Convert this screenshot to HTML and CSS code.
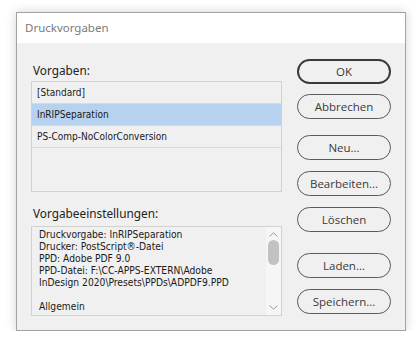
FILE: index.html
```html
<!DOCTYPE html>
<html lang="de">
<head>
    <meta charset="UTF-8">
    <title>Druckvorgaben</title>
    <link rel="stylesheet" href="styles.css">
</head>
<body>
    <div class="dialog">
        <div class="titlebar">Druckvorgaben</div>
        <div class="content">
            <div class="left">
                <div class="label first">Vorgaben:</div>
                <div class="presets">
                    <div class="row">[Standard]</div>
                    <div class="row selected">InRIPSeparation</div>
                    <div class="row">PS-Comp-NoColorConversion</div>
                </div>
                <div class="label second">Vorgabeeinstellungen:</div>
                <div class="settings">
                    <div class="settings-text">
                        <div>Druckvorgabe: InRIPSeparation</div>
                        <div>Drucker: PostScript®-Datei</div>
                        <div>PPD: Adobe PDF 9.0</div>
                        <div>PPD-Datei: F:\CC-APPS-EXTERN\Adobe</div>
                        <div>InDesign 2020\Presets\PPDs\ADPDF9.PPD</div>
                        <div>&nbsp;</div>
                        <div>Allgemein</div>
                    </div>
                    <div class="scrollbar">
                        <svg class="arrow" width="9" height="5" viewBox="0 0 9 5"><path d="M0.5 4.5 L4.5 0.8 L8.5 4.5" fill="none" stroke="#9a9a9a" stroke-width="1"/></svg>
                        <div class="thumb"></div>
                        <div class="track-space"></div>
                        <svg class="arrow" width="9" height="5" viewBox="0 0 9 5"><path d="M0.5 0.5 L4.5 4.2 L8.5 0.5" fill="none" stroke="#9a9a9a" stroke-width="1"/></svg>
                    </div>
                </div>
            </div>
            <div class="buttons">
                <button class="btn default">OK</button>
                <button class="btn">Abbrechen</button>
                <button class="btn group">Neu...</button>
                <button class="btn">Bearbeiten...</button>
                <button class="btn">Löschen</button>
                <button class="btn group-wide">Laden...</button>
                <button class="btn">Speichern...</button>
            </div>
        </div>
    </div>
</body>
</html>
```

FILE: styles.css
```css
body {
    margin: 0;
    padding: 12px 0 0 16px;
    background: #ffffff;
    font-family: "Open Sans", "Noto Sans", sans-serif;
    color: #222;
}

.dialog {
    width: 388px;
    height: 317px;
    border: 1px solid #a3a3a3;
    background: #f0f0f0;
    box-shadow: 0 0 10px rgba(0, 0, 0, 0.18);
    display: flex;
    flex-direction: column;
}

.titlebar {
    height: 30px;
    background: #fff;
    color: #7a7a7a;
    font-family: "Noto Sans", sans-serif;
    font-size: 11.5px;
    line-height: 30px;
    padding-left: 8px;
}

.content {
    display: flex;
    padding: 16px 14px 0 14px;
    gap: 15px;
}

.left {
    width: 251px;
    display: flex;
    flex-direction: column;
}

/* Beschriftungen */
.label {
    font-family: "Noto Sans", sans-serif;
    font-size: 11.8px;
    line-height: 17px;
    color: #222;
    padding-left: 2px;
}

.label.first {
    margin-top: 3px;
    margin-bottom: 2px;
}

.label.second {
    margin-top: 13px;
    margin-bottom: 4px;
}

.presets {
    height: 109px;
    border: 1px solid #d2d2d2;
    background: #f0f0f0;
}

.row {
    height: 21px;
    line-height: 21px;
    border-bottom: 1px solid #dadada;
    padding-left: 5px;
    font-family: "DejaVu Sans Condensed", "DejaVu Sans", sans-serif;
    font-size: 10px;
    color: #1a1a1a;
}

.row.selected {
    background: #b7d2ee;
}

.settings {
    height: 88px;
    border: 1px solid #d2d2d2;
    display: flex;
}

.settings-text {
    flex: 1;
    padding: 2px 0 0 7px;
    font-family: "DejaVu Sans Condensed", "DejaVu Sans", sans-serif;
    font-size: 10.2px;
    line-height: 12px;
    color: #1a1a1a;
    overflow: hidden;
}

.scrollbar {
    width: 15px;
    background: #f6f6f6;
    display: flex;
    flex-direction: column;
    align-items: center;
    padding-top: 5px;
}

.arrow {
    display: block;
}

.thumb {
    width: 11px;
    height: 25px;
    margin-top: 3px;
    background: #c2c2c2;
    border-radius: 6px;
}

.track-space {
    flex: 1;
}

.scrollbar .arrow:last-child {
    margin-bottom: 5px;
}

/* Buttons */
.buttons {
    display: flex;
    flex-direction: column;
}

.btn {
    width: 94px;
    height: 25px;
    margin-top: 11px;
    border: 1px solid #5a5a5a;
    border-radius: 13px;
    background: #f0f0f0;
    font-family: "Open Sans", "Noto Sans", sans-serif;
    font-size: 11.5px;
    color: #3a3a3a;
    padding: 0;
}

.btn.default {
    margin-top: 0;
    border: 2px solid #3a3a3a;
}

.btn.default + .btn {
    margin-top: 10px;
}

.btn.group {
    margin-top: 16px;
}

.btn.group-wide {
    margin-top: 21px;
}
```
